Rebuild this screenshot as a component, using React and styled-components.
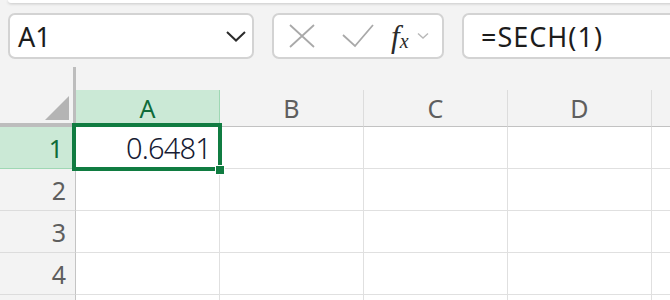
import React from 'react'
import styled, { createGlobalStyle } from 'styled-components';

const GlobalStyle = createGlobalStyle`
body {
  margin: 0;
  background: #f3f3f3;
  font-family: 'Noto Sans', 'Open Sans', sans-serif;
}
`;

const Page = styled.div`
width: 670px;
height: 300px;
overflow: hidden;
background: #f3f3f3;
`;

const RibbonEdge = styled.div`
height: 3px;
margin: 0 -20px 0 8px;
background: #ffffff;
border-radius: 0 0 10px 10px;
box-shadow: 0 1px 3px rgba(0, 0, 0, 0.18);
`;

const FormulaRow = styled.div`
display: flex;
gap: 18px;
padding: 10px 0 0 8px;
height: 46px;
`;

const Field = styled.div`
flex: none;
box-sizing: border-box;
width: ${p => p.width}px;
height: 46px;
display: flex;
align-items: center;
background: #ffffff;
border: 2px solid #d3d3d3;
border-radius: 7px;
`;

const NameText = styled.span`
flex: 1;
padding-left: 8px;
font-size: 27px;
color: #1c1c1c;
`;

const FormulaText = styled.span`
padding-left: 17px;
font-size: 27px;
color: #1c1c1c;
letter-spacing: 1px;
`;

const IconSlot = styled.span`
display: flex;
align-items: center;
margin-left: ${p => p.gap || 0}px;
`;

const Fx = styled.span`
margin-left: 17px;
font-family: 'Liberation Serif', serif;
font-style: italic;
font-size: 31px;
color: #2a2a2a;
line-height: 1;
sub {
  font-size: 20px;
  vertical-align: -1px;
}
`;

const Grid = styled.div`
margin-top: 8px;
`;

const HeaderBand = styled.div`
display: flex;
align-items: flex-end;
`;

const Corner = styled.div`
flex: none;
box-sizing: border-box;
width: 76px;
height: 60px;
border-right: 3px solid #bdbdbd;
border-bottom: 4px solid #bdbdbd;
display: flex;
align-items: flex-end;
justify-content: flex-end;
padding: 0 4px 3px 0;
`;

const ColHead = styled.div`
flex: none;
box-sizing: border-box;
width: 144px;
height: 37px;
display: flex;
align-items: center;
justify-content: center;
font-size: 25px;
color: ${p => (p.active ? '#0e6b39' : '#5e5e5e')};
background: ${p => (p.active ? '#cbe9d6' : '#f3f3f3')};
border-right: 1px solid ${p => (p.active ? '#9fd8b4' : '#dcdcdc')};
border-bottom: 1px solid #c2c2c2;
`;

const Row = styled.div`
display: flex;
height: 42px;
`;

const RowHead = styled.div`
flex: none;
box-sizing: border-box;
width: 76px;
display: flex;
align-items: center;
justify-content: flex-end;
padding-right: ${p => (p.active ? 12 : 9)}px;
font-size: 25px;
color: ${p => (p.active ? '#0e6b39' : '#5e5e5e')};
background: ${p => (p.active ? '#cbe9d6' : '#f3f3f3')};
border-right: 1px solid #c4c4c4;
border-bottom: 1px solid ${p => (p.active ? '#9fd8b4' : '#dcdcdc')};
`;

const Cell = styled.div`
flex: none;
position: relative;
box-sizing: border-box;
width: 144px;
display: flex;
align-items: center;
justify-content: flex-end;
padding-right: 8px;
background: #ffffff;
border-right: 1px solid #e0e0e0;
border-bottom: 1px solid #e0e0e0;
font-size: 29px;
font-weight: 300;
letter-spacing: -0.8px;
color: #161a33;
`;

const Selection = styled.div`
position: absolute;
z-index: 2;
left: -4px;
top: -4px;
width: 150px;
height: 48px;
box-sizing: border-box;
border: 4px solid #107c41;
pointer-events: none;
`;

const FillHandle = styled.div`
position: absolute;
right: -6px;
bottom: -7px;
width: 8px;
height: 8px;
background: #107c41;
box-shadow: 0 0 0 1px #ffffff;
`;

// E and row 5 only peek in at the edges, so they carry no label
const columns = ['A', 'B', 'C', 'D', ''];
const rows = [1, 2, 3, 4, ''];

const App = () => {
  return (
    <Page>
      <GlobalStyle />
      <RibbonEdge />
      <FormulaRow>
        <Field width={246}>
          <NameText>A1</NameText>
          <IconSlot style={{ marginRight: 5 }}>
            <svg width="22" height="12" viewBox="0 0 22 12">
              <polyline points="2,2 11,10.5 20,2" fill="none" stroke="#2b2b2b" strokeWidth="2" />
            </svg>
          </IconSlot>
        </Field>
        <Field width={172}>
          <IconSlot gap={14}>
            <svg width="28" height="26" viewBox="0 0 28 26">
              <path d="M2 2 L26 24 M26 2 L2 24" stroke="#a9a9a9" strokeWidth="1.8" fill="none" />
            </svg>
          </IconSlot>
          <IconSlot gap={26}>
            <svg width="32" height="24" viewBox="0 0 32 24">
              <polyline points="1,11 13,22 31,1" stroke="#a9a9a9" strokeWidth="1.8" fill="none" />
            </svg>
          </IconSlot>
          <Fx>f<sub>x</sub></Fx>
          <IconSlot gap={8}>
            <svg width="12" height="8" viewBox="0 0 12 8">
              <polyline points="1,1.5 6,6 11,1.5" fill="none" stroke="#b8b8b8" strokeWidth="1.4" />
            </svg>
          </IconSlot>
        </Field>
        <Field width={240} style={{ borderRightWidth: 0, borderRadius: '7px 0 0 7px' }}>
          <FormulaText>=SECH(1)</FormulaText>
        </Field>
      </FormulaRow>
      <Grid>
        <HeaderBand>
          <Corner>
            <svg width="24" height="24" viewBox="0 0 24 24">
              <polygon points="24,0 24,24 0,24" fill="#b4b4b4" />
            </svg>
          </Corner>
          {columns.map((c, i) => (
            <ColHead key={i} active={c === 'A'}>{c}</ColHead>
          ))}
        </HeaderBand>
        {rows.map((r, ri) => (
          <Row key={ri}>
            <RowHead active={r === 1}>{r}</RowHead>
            {columns.map((c, ci) => (
              <Cell key={ci}>
                {r === 1 && c === 'A' && (
                  <>
                    0.6481
                    <Selection>
                      <FillHandle />
                    </Selection>
                  </>
                )}
              </Cell>
            ))}
          </Row>
        ))}
      </Grid>
    </Page>
  )
}

export default App
